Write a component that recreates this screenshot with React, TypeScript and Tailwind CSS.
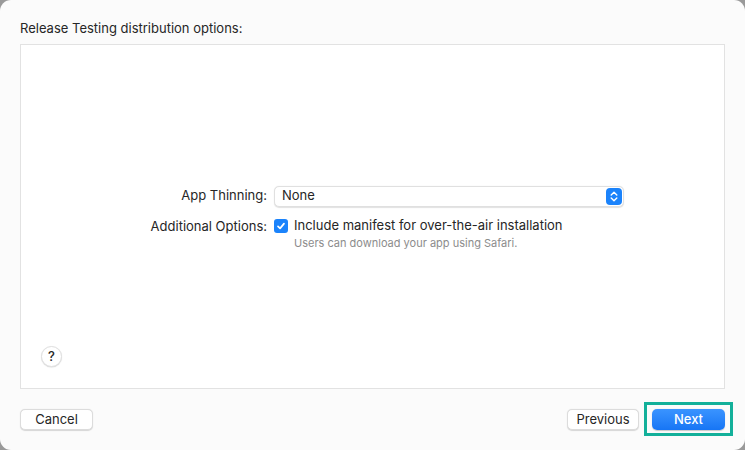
import React from 'react'

const font = { fontFamily: 'Inter, "Noto Sans", sans-serif' }

function Stepper() {
    return (
        <div className="w-[16px] h-[17px] rounded-[4px] bg-[#1b83fb] flex items-center justify-center">
            <svg width="8" height="11" viewBox="0 0 8 11" fill="none">
                <path d="M1.2 4 L4 1.3 L6.8 4" stroke="white" strokeWidth="1.4" strokeLinecap="round" strokeLinejoin="round" />
                <path d="M1.2 7 L4 9.7 L6.8 7" stroke="white" strokeWidth="1.4" strokeLinecap="round" strokeLinejoin="round" />
            </svg>
        </div>
    )
}

function Checkbox() {
    return (
        <div className="w-[14px] h-[14px] rounded-[3px] bg-[#1b83fb] flex items-center justify-center shrink-0">
            <svg width="10" height="10" viewBox="0 0 10 10" fill="none">
                <path d="M2 5.3 L4.1 7.4 L8 2.6" stroke="white" strokeWidth="1.7" strokeLinecap="round" strokeLinejoin="round" />
            </svg>
        </div>
    )
}

function PlainButton({ label, width }: { label: string; width: string }) {
    return (
        <button
            className={`${width} h-[21px] rounded-[5px] bg-white border border-[#dcdcdc] shadow-[0_0.5px_1px_rgba(0,0,0,0.15)] text-[13px] text-[#262626] flex items-center justify-center`}
        >
            {label}
        </button>
    )
}

export default function App() {
    return (
        <div className="w-[745px] h-[450px] bg-[#9a9a9a]" style={font}>
            <div className="w-full h-full bg-[#fbfbfb] rounded-[11px] flex flex-col px-[20px]">
                {/* Title */}
                <div className="h-[44px] pt-[19px] text-[13px] text-[#262626] leading-[18px]">
                    Release Testing distribution options:
                </div>

                {/* Panel */}
                <div className="h-[345px] bg-white border border-[#e2e2e2] flex flex-col">
                    <div className="flex-1" />

                    <div className="grid grid-cols-[246px_1fr] gap-x-[7px] pr-[100px] items-center mt-[24px]">
                        <div className="text-right text-[13px] text-[#262626]">App Thinning:</div>
                        <div className="h-[21px] rounded-[5px] bg-white border border-[#e0e0e0] shadow-[0_0.5px_1px_rgba(0,0,0,0.12)] flex items-center justify-between pl-[7px] pr-[1px]">
                            <span className="text-[13px] text-[#262626]">None</span>
                            <Stepper />
                        </div>

                        <div className="text-right text-[13px] text-[#262626] mt-[10px] self-start leading-[18px]">
                            Additional Options:
                        </div>
                        <div className="mt-[10px] flex flex-col">
                            <div className="flex items-center gap-[6px] h-[18px]">
                                <Checkbox />
                                <span className="text-[13px] text-[#262626]">
                                    Include manifest for over-the-air installation
                                </span>
                            </div>
                            <div className="pl-[20px] text-[11px] text-[#8c8c8c] leading-[15px] mt-[1px]">
                                Users can download your app using Safari.
                            </div>
                        </div>
                    </div>

                    {/* Help */}
                    <div className="flex-1 flex items-end pl-[20px] pb-[21px]">
                        <div className="w-[21px] h-[21px] rounded-full bg-white border border-[#e0e0e0] shadow-[0_0.5px_1px_rgba(0,0,0,0.15)] flex items-center justify-center text-[13px] text-[#262626] font-medium">
                            ?
                        </div>
                    </div>
                </div>

                {/* Footer */}
                <div className="flex items-center justify-between pt-[20px]">
                    <PlainButton label="Cancel" width="w-[73px]" />
                    <div className="flex items-center gap-[13px]">
                        <PlainButton label="Previous" width="w-[72px]" />
                        <div className="relative">
                            <button className="w-[73px] h-[21px] rounded-[5px] bg-gradient-to-b from-[#3a94ff] to-[#1675f5] text-[13px] text-white font-medium flex items-center justify-center shadow-[0_0.5px_1px_rgba(0,0,0,0.2)]">
                                Next
                            </button>
                            <div className="absolute left-[-8px] top-[-7px] w-[89px] h-[34px] border-[3px] border-[#13b09a] pointer-events-none" />
                        </div>
                    </div>
                </div>
            </div>
        </div>
    )
}
